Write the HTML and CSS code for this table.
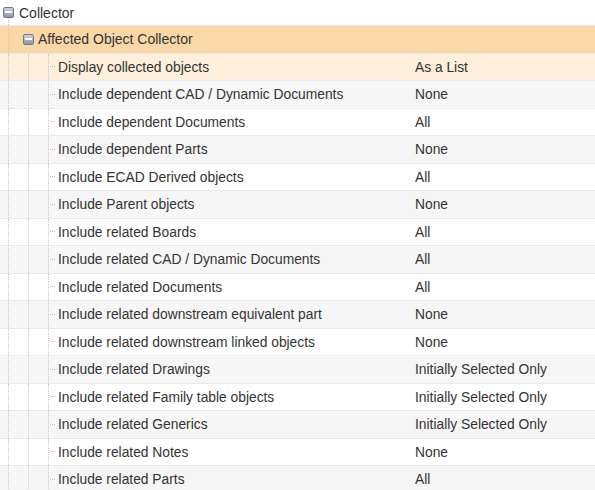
FILE: index.html
```html
<!DOCTYPE html>
<html>
<head>
<meta charset="utf-8">
<link rel="stylesheet" href="styles.css">
</head>
<body>
<div class="tree">
  <div class="row root">
    <span class="toggle"><span class="minus"></span></span>
    <span class="label root-label">Collector</span>
  </div>
  <div class="row group">
    <span class="guide g1"></span>
    <span class="toggle gtoggle"><span class="minus"></span></span>
    <span class="label group-label">Affected Object Collector</span>
  </div>
  <div class="row leaf selected">
    <span class="guide g1"></span><span class="guide g2"></span><span class="guide g3"></span>
    <span class="name">Display collected objects</span><span class="value">As a List</span>
  </div>
  <div class="row leaf alt">
    <span class="guide g1"></span><span class="guide g2"></span><span class="guide g3"></span>
    <span class="name">Include dependent CAD / Dynamic Documents</span><span class="value">None</span>
  </div>
  <div class="row leaf">
    <span class="guide g1"></span><span class="guide g2"></span><span class="guide g3"></span>
    <span class="name">Include dependent Documents</span><span class="value">All</span>
  </div>
  <div class="row leaf alt">
    <span class="guide g1"></span><span class="guide g2"></span><span class="guide g3"></span>
    <span class="name">Include dependent Parts</span><span class="value">None</span>
  </div>
  <div class="row leaf">
    <span class="guide g1"></span><span class="guide g2"></span><span class="guide g3"></span>
    <span class="name">Include ECAD Derived objects</span><span class="value">All</span>
  </div>
  <div class="row leaf alt">
    <span class="guide g1"></span><span class="guide g2"></span><span class="guide g3"></span>
    <span class="name">Include Parent objects</span><span class="value">None</span>
  </div>
  <div class="row leaf">
    <span class="guide g1"></span><span class="guide g2"></span><span class="guide g3"></span>
    <span class="name">Include related Boards</span><span class="value">All</span>
  </div>
  <div class="row leaf alt">
    <span class="guide g1"></span><span class="guide g2"></span><span class="guide g3"></span>
    <span class="name">Include related CAD / Dynamic Documents</span><span class="value">All</span>
  </div>
  <div class="row leaf">
    <span class="guide g1"></span><span class="guide g2"></span><span class="guide g3"></span>
    <span class="name">Include related Documents</span><span class="value">All</span>
  </div>
  <div class="row leaf alt">
    <span class="guide g1"></span><span class="guide g2"></span><span class="guide g3"></span>
    <span class="name">Include related downstream equivalent part</span><span class="value">None</span>
  </div>
  <div class="row leaf">
    <span class="guide g1"></span><span class="guide g2"></span><span class="guide g3"></span>
    <span class="name">Include related downstream linked objects</span><span class="value">None</span>
  </div>
  <div class="row leaf alt">
    <span class="guide g1"></span><span class="guide g2"></span><span class="guide g3"></span>
    <span class="name">Include related Drawings</span><span class="value">Initially Selected Only</span>
  </div>
  <div class="row leaf">
    <span class="guide g1"></span><span class="guide g2"></span><span class="guide g3"></span>
    <span class="name">Include related Family table objects</span><span class="value">Initially Selected Only</span>
  </div>
  <div class="row leaf alt">
    <span class="guide g1"></span><span class="guide g2"></span><span class="guide g3"></span>
    <span class="name">Include related Generics</span><span class="value">Initially Selected Only</span>
  </div>
  <div class="row leaf">
    <span class="guide g1"></span><span class="guide g2"></span><span class="guide g3"></span>
    <span class="name">Include related Notes</span><span class="value">None</span>
  </div>
  <div class="row leaf alt">
    <span class="guide g1"></span><span class="guide g2"></span><span class="guide g3"></span>
    <span class="name">Include related Parts</span><span class="value">All</span>
  </div>
</div>
</body>
</html>
```
FILE: styles.css
```css
html, body {
  margin: 0;
  padding: 0;
  background: #ffffff;
}
body {
  font-family: "Liberation Sans", Arial, sans-serif;
  font-size: 13.8px;
  color: #333333;
}
.tree {
  width: 595px;
}
.row {
  display: flex;
  align-items: stretch;
  height: 27.5px;
  box-sizing: border-box;
  border-top: 1px solid #e9e9e9;
  background: #ffffff;
}
.row.root {
  height: 25px;
  border-top: none;
  position: relative;
}
.row.group {
  background: #f9d7a6;
}
.row.selected {
  background: #fdefdc;
}
.row.alt {
  background: #f6f6f6;
}
.toggle {
  width: 11px;
  height: 11px;
  box-sizing: border-box;
  border: 1px solid #6c7a8c;
  border-radius: 2px;
  background: linear-gradient(#c9d3df, #8797ab);
  align-self: center;
  display: flex;
  align-items: center;
  justify-content: center;
  margin-left: 3px;
  position: relative;
}
.minus {
  width: 7px;
  height: 2px;
  background: #ffffff;
}
.root .toggle {
  margin-top: -1px;
}
.root::after {
  content: "";
  position: absolute;
  left: 8px;
  top: 18px;
  bottom: 0;
  border-left: 1px dotted #c8c8c8;
}
.label {
  display: flex;
  align-items: center;
}
.root-label {
  margin-left: 5px;
  font-size: 14px;
}
.group-label {
  margin-left: 4px;
  font-size: 14px;
}
.gtoggle {
  margin-left: 14px;
}
.guide {
  flex: none;
  border-left: 1px dotted #c8c8c8;
  box-sizing: border-box;
}
.g1 {
  margin-left: 8px;
  width: 20px;
}
.g2 {
  width: 20px;
}
.group .g1 {
  width: 1px;
}
.g3 {
  width: 10px;
  background: linear-gradient(to right, #c0c0c0 50%, transparent 50%) 1px 50% / 2px 1px repeat-x;
  background-clip: content-box;
  padding-right: 2px;
}
.name {
  display: flex;
  align-items: center;
  width: 357px;
  flex: none;
  padding-top: 1px;
}
.value {
  display: flex;
  align-items: center;
  padding-top: 1px;
}
```
